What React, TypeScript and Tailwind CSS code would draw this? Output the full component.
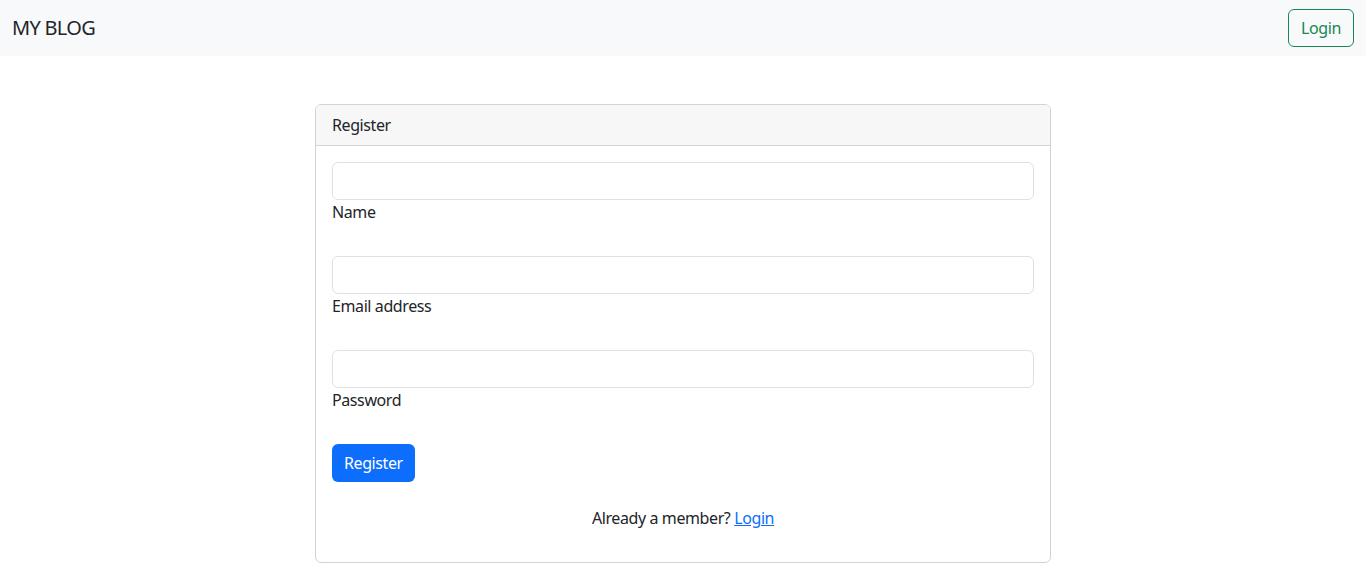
import React from 'react';

const fields = [
  { id: 'name', label: 'Name', type: 'text' },
  { id: 'email', label: 'Email address', type: 'email' },
  { id: 'password', label: 'Password', type: 'password' },
];

export default function App() {
  return (
    <div className="min-h-screen bg-white text-[#212529] font-['Noto_Sans',sans-serif] text-base leading-6 tracking-[-0.4px]">
      <nav className="h-14 bg-[#f8f9fa] flex items-center justify-between px-3">
        <span className="text-xl leading-[30px] tracking-[-0.7px] text-[#212529]">MY BLOG</span>
        <button className="h-[38px] px-3 rounded-md border border-[#198754] text-[#198754] text-base">
          Login
        </button>
      </nav>

      <div className="w-[736px] mx-auto mt-12 border border-[#d3d3d3] rounded-md overflow-hidden">
        <div className="h-[41px] px-4 flex items-center bg-[#f7f7f7] border-b border-[#d3d3d3]">Register</div>
        <div className="p-4">
          {fields.map((f) => (
            <div key={f.id} className="mb-8">
              <input
                id={f.id}
                type={f.type}
                className="block w-full h-[38px] px-3 rounded-md border border-[#dee2e6] bg-white outline-none"
              />
              <label htmlFor={f.id} className="block">{f.label}</label>
            </div>
          ))}
          <button className="h-[38px] px-3 rounded-md bg-[#0d6efd] text-white">Register</button>
          <p className="mt-6 mb-4 text-center">
            Already a member?{' '}
            <a href="#" className="text-[#0d6efd] underline">Login</a>
          </p>
        </div>
      </div>
    </div>
  );
}
